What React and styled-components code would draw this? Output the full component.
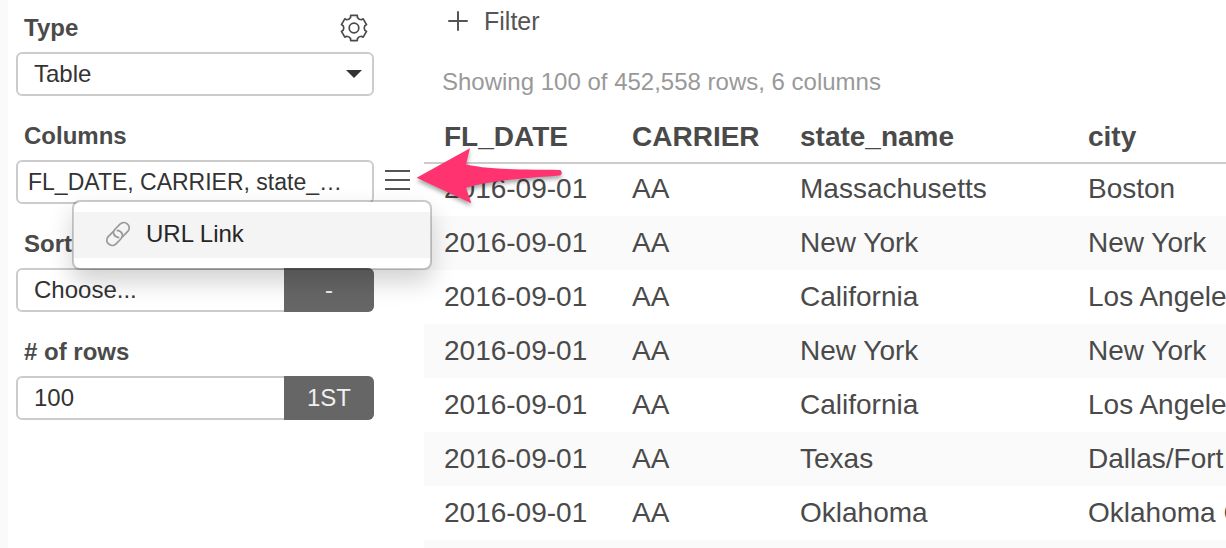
import React from 'react'
import styled, { createGlobalStyle } from 'styled-components'

const GlobalStyle = createGlobalStyle`
  * {
    box-sizing: border-box;
  }
  body {
    margin: 0;
    background-color: #fff;
    color: #4a4a4a;
    font-family: 'Helvetica Neue', 'Liberation Sans', Arial, sans-serif;
    font-size: 24px;
  }
  button, input, select {
    font: inherit;
    color: inherit;
    margin: 0;
  }
`

const Page = styled.div`
  display: flex;
  height: 100vh;
  overflow: hidden;
  border-left: 8px solid #fafafa;
`

const Sidebar = styled.aside`
  position: relative;
  z-index: 1;
  flex: none;
  width: 416px;
  padding: 4px 8px;
  display: flex;
  flex-direction: column;
  gap: 16px;
`

const Field = styled.div`
  display: flex;
  flex-direction: column;
`

const FieldHeader = styled.div`
  display: flex;
  align-items: center;
  justify-content: space-between;
  width: 358px;
  height: 48px;
  padding: 0 6px 0 8px;
`

const Label = styled.label`
  font-weight: bold;
`

const ControlRow = styled.div`
  position: relative;
  z-index: 1;
  display: flex;
  align-items: center;
  gap: 10px;
`

const Control = styled.div`
  position: relative;
  display: flex;
  width: 358px;
  height: 44px;
  border: 2px solid #ccc;
  border-radius: 6px;
  background-color: #fff;
  color: #333;
`

const Select = styled.select`
  flex: 1;
  min-width: 0;
  padding: 0 16px 2px;
  border: 0;
  background: none;
  appearance: none;
`

const Input = styled.input`
  flex: 1;
  min-width: 0;
  padding: 0 16px;
  border: 0;
  background: none;
`

const Caret = styled.span`
  position: absolute;
  top: 16px;
  right: 10px;
  border: 8px solid transparent;
  border-top-color: #333;
  border-bottom-width: 0;
  pointer-events: none;
`

const ColumnsButton = styled.button`
  flex: 1;
  padding: 0 10px;
  border: 0;
  background: none;
  font-size: 23px;
  text-align: left;
  white-space: nowrap;
`

const Addon = styled.button`
  width: 90px;
  margin: -2px;
  padding: 0;
  border: 0;
  border-radius: 0 6px 6px 0;
  background-color: #666;
  color: #f0f0f0;
`

const IconButton = styled.button`
  display: flex;
  padding: 0;
  border: 0;
  background: none;
`

const Menu = styled.ul`
  position: absolute;
  top: 40px;
  left: 56px;
  width: 360px;
  margin: 0;
  padding: 10px 0;
  border: 2px solid rgba(0, 0, 0, 0.2);
  border-radius: 8px;
  background-color: #fff;
  background-clip: padding-box;
  box-shadow: 0 12px 24px rgba(0, 0, 0, 0.18);
  list-style: none;
`

const MenuItem = styled.button`
  display: flex;
  align-items: center;
  gap: 14px;
  width: 100%;
  height: 46px;
  padding: 0 30px 2px;
  border: 0;
  background-color: #f4f4f4;
  color: #262626;
`

const Pointer = styled.svg`
  position: absolute;
  top: -16px;
  left: 394px;
  overflow: visible;
  filter: drop-shadow(0 3px 2px rgba(0, 0, 0, 0.35));
  pointer-events: none;
`

const Main = styled.main`
  flex: 1;
  min-width: 0;
  overflow: hidden;
`

const FilterButton = styled.button`
  display: flex;
  align-items: center;
  gap: 16px;
  height: 42px;
  padding: 0 24px;
  border: 0;
  background: none;
  font-size: 25px;
  color: #555;
`

const Summary = styled.p`
  margin: 20px 0 8px;
  padding-left: 18px;
  line-height: 40px;
  color: #999;
`

const Table = styled.table`
  width: 100%;
  table-layout: fixed;
  border-spacing: 0;
  font-size: 28px;
`

const Th = styled.th`
  width: ${({ $width }) => $width ? `${$width}px` : 'auto'};
  height: 52px;
  padding: 2px 0 0 20px;
  text-align: left;
  white-space: nowrap;
`

const Row = styled.tr`
  &:nth-child(even) {
    background-color: #fafafa;
  }
  &:first-child > td {
    box-shadow: inset 0 2px #ccc;
  }
`

const Td = styled.td`
  height: 54px;
  padding: 0 0 0 20px;
  white-space: nowrap;
`

// point at radius r, deg clockwise from the top of the gear
const polar = (r, deg) => {
  const a = deg * Math.PI / 180
  return `${(14 + r * Math.sin(a)).toFixed(2)} ${(14 - r * Math.cos(a)).toFixed(2)}`
}

const gearPath = [0, 60, 120, 180, 240, 300].map((deg) => (
  `${deg === 0 ? 'M' : 'L'}${polar(13, deg - 15)}` +
  `L${polar(13, deg + 15)}` +
  `L${polar(11.1, deg + 18)}` +
  `Q${polar(9.6, deg + 30)} ${polar(11.1, deg + 42)}`
)).join('') + 'Z'

const GearIcon = () => (
  <svg width="28" height="28" viewBox="0 0 28 28" fill="none" stroke="#4a4a4a" strokeWidth="1.7" strokeLinejoin="round">
    <path d={gearPath} />
    <circle cx="14" cy="14" r="4.8" />
  </svg>
)

const BarsIcon = () => (
  <svg width="28" height="28" viewBox="0 0 28 28" stroke="#555" strokeWidth="2">
    <path d="M1 3h25M1 12h25M1 21h25" />
  </svg>
)

const linkPath = 'M14.6 17.6C9.6 16.5 8 12.4 11.2 9L16 4.2C20.8-0.5 28.5 6.2 23.8 11.4L18.8 16.4'

const LinkIcon = () => (
  <svg width="28" height="28" viewBox="0 0 28 28" fill="none" stroke="#999" strokeWidth="1.7" strokeLinecap="round">
    <path d={linkPath} />
    <path d={linkPath} transform="rotate(180 14 14)" />
  </svg>
)

const PlusIcon = () => (
  <svg width="20" height="20" viewBox="0 0 20 20" stroke="#555" strokeWidth="2" strokeLinecap="round">
    <path d="M10 1v18M1 10h18" />
  </svg>
)

const PointerArrow = () => (
  <Pointer width="160" height="70" viewBox="0 0 160 70" aria-hidden="true">
    <path
      fill="#ff3370"
      d="M6.7 33.7L60 4.3L56 20.3C76 25.5 105 25.5 149.5 26C152.5 26.5 152.5 31 149.5 31.5C110 34.5 82 36.5 56 43.7L61.3 59.3Z"
    />
  </Pointer>
)

const columns = [
  { name: 'FL_DATE', width: 188 },
  { name: 'CARRIER', width: 168 },
  { name: 'state_name', width: 288 },
  { name: 'city' },
]

const rows = [
  ['2016-09-01', 'AA', 'Massachusetts', 'Boston'],
  ['2016-09-01', 'AA', 'New York', 'New York'],
  ['2016-09-01', 'AA', 'California', 'Los Angeles'],
  ['2016-09-01', 'AA', 'New York', 'New York'],
  ['2016-09-01', 'AA', 'California', 'Los Angeles'],
  ['2016-09-01', 'AA', 'Texas', 'Dallas/Fort Worth'],
  ['2016-09-01', 'AA', 'Oklahoma', 'Oklahoma City'],
  ['', '', '', ''],
]

const Settings = () => (
  <Sidebar>
    <Field>
      <FieldHeader>
        <Label htmlFor="type">Type</Label>
        <IconButton aria-label="Settings"><GearIcon /></IconButton>
      </FieldHeader>
      <Control>
        <Select id="type"><option>Table</option></Select>
        <Caret />
      </Control>
    </Field>
    <Field>
      <FieldHeader>
        <Label htmlFor="columns">Columns</Label>
      </FieldHeader>
      <ControlRow>
        <Control>
          <ColumnsButton id="columns">FL_DATE, CARRIER, state_…</ColumnsButton>
        </Control>
        <IconButton aria-label="Column menu"><BarsIcon /></IconButton>
        <Menu>
          <li><MenuItem><LinkIcon />URL Link</MenuItem></li>
        </Menu>
        <PointerArrow />
      </ControlRow>
    </Field>
    <Field>
      <FieldHeader>
        <Label htmlFor="sort">Sort</Label>
      </FieldHeader>
      <Control>
        <Select id="sort"><option>Choose...</option></Select>
        <Addon>-</Addon>
      </Control>
    </Field>
    <Field>
      <FieldHeader>
        <Label htmlFor="rows"># of rows</Label>
      </FieldHeader>
      <Control>
        <Input id="rows" type="text" defaultValue="100" />
        <Addon>1ST</Addon>
      </Control>
    </Field>
  </Sidebar>
)

const App = () => (
  <>
    <GlobalStyle />
    <Page>
      <Settings />
      <Main>
        <FilterButton><PlusIcon />Filter</FilterButton>
        <Summary>Showing 100 of 452,558 rows, 6 columns</Summary>
        <Table>
          <thead>
            <tr>
              {columns.map(({ name, width }) => (
                <Th key={name} $width={width}>{name}</Th>
              ))}
            </tr>
          </thead>
          <tbody>
            {rows.map((row, y) => (
              <Row key={y}>
                {row.map((value, x) => <Td key={x}>{value}</Td>)}
              </Row>
            ))}
          </tbody>
        </Table>
      </Main>
    </Page>
  </>
)

export default App
